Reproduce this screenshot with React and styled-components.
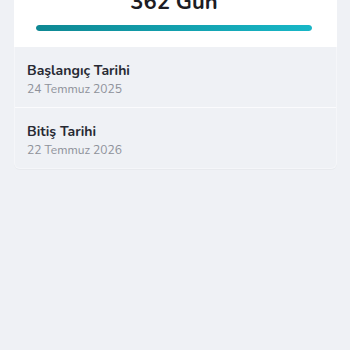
import styled, { createGlobalStyle } from 'styled-components'

const GlobalStyle = createGlobalStyle`
  html, body {
    margin: 0;
    padding: 0;
    background: #eff1f5;
    font-family: "Nunito", "Lato", "Noto Sans", sans-serif;
  }
`

const Page = styled.div`
  padding: 0 13px 0 14px;
  margin-top: -12px;
  display: flex;
  flex-direction: column;
  min-height: 362px;
`

const SummaryCard = styled.div`
  background: #ffffff;
  padding: 0 25px 16px 22px;
`

const Days = styled.h2`
  margin: 0 0 9px;
  font-size: 22px;
  line-height: 28px;
  font-weight: 700;
  color: #1c1d24;
  text-align: center;
`

const Track = styled.div`
  height: 6px;
  border-radius: 3px;
  background: #e3e7ec;
  overflow: hidden;
`

const Fill = styled.div`
  height: 100%;
  border-radius: 3px;
  background: linear-gradient(90deg, #0e8893, #18b7c7);
`

const InfoCard = styled.div`
  background: #eff1f5;
  border: 1px solid #f5f6f9;
  border-top: none;
  border-radius: 0 0 6px 6px;
  box-shadow: 0 1px 1px rgba(0, 0, 0, 0.03);
`

const Row = styled.div`
  padding: 15px 12px 9px;
  border-top: ${p => (p.$divided ? '1px solid #fbfbfd' : 'none')};
  display: flex;
  flex-direction: column;
`

const Label = styled.div`
  font-size: 14px;
  line-height: 18px;
  font-weight: 700;
  color: #272933;
`

const Value = styled.div`
  font-size: 12px;
  line-height: 18px;
  color: #8d9099;
`

const dates = [
  { label: 'Başlangıç Tarihi', value: '24 Temmuz 2025' },
  { label: 'Bitiş Tarihi', value: '22 Temmuz 2026' },
]

export default function App() {
  const progress = 100

  return (
    <>
      <GlobalStyle />
      <Page>
        <SummaryCard>
          <Days>362 Gün</Days>
          <Track>
            <Fill style={{ width: `${progress}%` }} />
          </Track>
        </SummaryCard>
        <InfoCard>
          {dates.map((d, i) => (
            <Row key={d.label} $divided={i > 0}>
              <Label>{d.label}</Label>
              <Value>{d.value}</Value>
            </Row>
          ))}
        </InfoCard>
      </Page>
    </>
  )
}
